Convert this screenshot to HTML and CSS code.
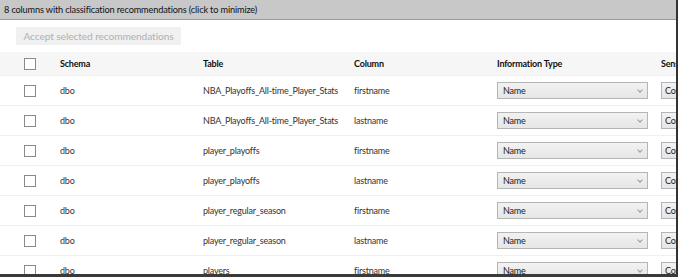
FILE: index.html
```html
<!DOCTYPE html>
<html>
<head>
<meta charset="utf-8">
<link rel="stylesheet" href="styles.css">
</head>
<body>
<div class="frame">
  <div class="titlebar">8 columns with classification recommendations (click to minimize)</div>
  <div class="toolbar"><button class="accept" disabled>Accept selected recommendations</button></div>
  <table class="grid">
    <colgroup>
      <col class="c-check"><col class="c-schema"><col class="c-table"><col class="c-column"><col class="c-info"><col class="c-sens">
    </colgroup>
    <thead>
      <tr><th><span class="cb"></span></th><th>Schema</th><th>Table</th><th>Column</th><th>Information Type</th><th>Sensitivity Label</th></tr>
    </thead>
    <tbody>
      <tr><td><span class="cb"></span></td><td>dbo</td><td>NBA_Playoffs_All-time_Player_Stats</td><td>firstname</td><td><span class="dd">Name<span class="chev"></span></span></td><td><span class="dd2">Confidential - GDPR</span></td></tr>
      <tr><td><span class="cb"></span></td><td>dbo</td><td>NBA_Playoffs_All-time_Player_Stats</td><td>lastname</td><td><span class="dd">Name<span class="chev"></span></span></td><td><span class="dd2">Confidential - GDPR</span></td></tr>
      <tr><td><span class="cb"></span></td><td>dbo</td><td>player_playoffs</td><td>firstname</td><td><span class="dd">Name<span class="chev"></span></span></td><td><span class="dd2">Confidential - GDPR</span></td></tr>
      <tr><td><span class="cb"></span></td><td>dbo</td><td>player_playoffs</td><td>lastname</td><td><span class="dd">Name<span class="chev"></span></span></td><td><span class="dd2">Confidential - GDPR</span></td></tr>
      <tr><td><span class="cb"></span></td><td>dbo</td><td>player_regular_season</td><td>firstname</td><td><span class="dd">Name<span class="chev"></span></span></td><td><span class="dd2">Confidential - GDPR</span></td></tr>
      <tr><td><span class="cb"></span></td><td>dbo</td><td>player_regular_season</td><td>lastname</td><td><span class="dd">Name<span class="chev"></span></span></td><td><span class="dd2">Confidential - GDPR</span></td></tr>
      <tr><td><span class="cb"></span></td><td>dbo</td><td>players</td><td>firstname</td><td><span class="dd">Name<span class="chev"></span></span></td><td><span class="dd2">Confidential - GDPR</span></td></tr>
    </tbody>
  </table>
</div>
</body>
</html>
```
FILE: styles.css
```css
html, body { margin: 0; padding: 0; background: #fff; }
body { font-family: Lato, "Open Sans", sans-serif; font-size: 9px; letter-spacing: -0.2px; color: #222; }
.frame {
  width: 676px; height: 274px; overflow: hidden;
  border-right: 2px solid #333; border-bottom: 3px solid #3a3a3a;
  background: #fff;
}
.titlebar {
  height: 20px; line-height: 19px; box-sizing: border-box;
  background: #c8c8c8; border-bottom: 1px solid #9a9a9a;
  padding-left: 4px; font-size: 9.2px; letter-spacing: -0.15px; color: #111; white-space: nowrap;
}
.toolbar { padding: 7px 0 0 16px; height: 26px; box-sizing: border-box; }
.accept {
  width: 165px; height: 18px; border: 0; background: #f0f0f0;
  font-family: inherit; font-size: 10.2px; letter-spacing: -0.1px; color: #b0b0b0; padding: 0; text-align: center;
}
.grid { border-collapse: collapse; table-layout: fixed; width: 700px; margin-top: 6px; }
.c-check { width: 60px; } .c-schema { width: 143px; } .c-table { width: 151px; }
.c-column { width: 143px; } .c-info { width: 164px; } .c-sens { width: 40px; }
th {
  background: #f6f6f6; text-align: left; font-weight: 700; height: 23px; padding: 0;
  white-space: nowrap; overflow: hidden; color: #111;
}
td { height: 29px; padding: 0; border-top: 1px solid #f0f0f0; white-space: nowrap; overflow: hidden; color: #333; }
th:first-child, td:first-child { padding-left: 24px; }
.cb { display: inline-block; width: 10px; height: 10px; border: 1px solid #8a8a8a; background: #fff; vertical-align: middle; }
.dd {
  display: flex; align-items: center; justify-content: space-between; box-sizing: border-box;
  width: 151px; height: 17px; border: 1px solid #b5b5b5; background: linear-gradient(#f2f2f2, #e6e6e6);
  padding: 0 5px 0 5px; color: #222;
}
.chev { width: 3px; height: 3px; border-right: 1px solid #999; border-bottom: 1px solid #999; transform: rotate(45deg); margin-top: -2px; }
.dd2 {
  display: block; box-sizing: border-box; width: 120px; height: 17px; line-height: 15px;
  border: 1px solid #b5b5b5; background: linear-gradient(#f2f2f2, #e6e6e6); padding-left: 3px; color: #222;
}
```
